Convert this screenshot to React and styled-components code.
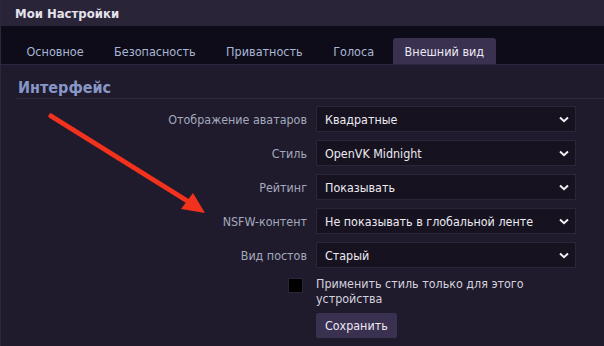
import React from "react";
import styled, { createGlobalStyle } from "styled-components";

const Global = createGlobalStyle`
  html, body { margin: 0; padding: 0; background: #1f1b2c; }
  body { width: 604px; height: 346px; overflow: hidden; font-family: "DejaVu Sans Condensed", "DejaVu Sans", sans-serif; font-stretch: condensed; }
`;

const Page = styled.div`
  position: relative;
  width: 604px;
  height: 346px;
  background: #1f1b2c;
  border-left: 1px solid #2c2740;
  box-sizing: border-box;
`;

const Header = styled.div`
  height: 26px;
  background: #2a2438;
  display: flex;
  align-items: center;
  padding-left: 14px;
  color: #e4e2ec;
  font-weight: bold;
  font-size: 13px;
`;

const TabBar = styled.div`
  height: 38px;
  background: #0f0c19;
  display: flex;
  align-items: flex-end;
  padding-left: 14px;
  gap: 7.5px;
  border-bottom: 1px solid #2c2740;
`;

const Tab = styled.div`
  height: 26px;
  padding: 0 11.5px;
  display: flex;
  align-items: center;
  font-size: 12.5px;
  border-radius: 3px 3px 0 0;
  color: ${(p) => (p.$active ? "#ece8f4" : "#a9b6d4")};
  background: ${(p) => (p.$active ? "#3a3050" : "transparent")};
`;

const Content = styled.div`
  padding: 13px 0 0 16px;
`;

const Heading = styled.div`
  font-size: 16px;
  line-height: 19px;
  font-weight: bold;
  color: #8797c8;
  padding: 0 0 1px 1px;
  border-bottom: 1px solid #2e2940;
`;

const Form = styled.div`
  display: grid;
  grid-template-columns: 290px 260px;
  column-gap: 9px;
  row-gap: 8px;
  padding-top: 7px;
  align-items: center;
`;

const Label = styled.div`
  text-align: right;
  font-size: 12.4px;
  color: #a4a9bd;
`;

const Select = styled.div`
  height: 26px;
  box-sizing: border-box;
  background: #16121f;
  border: 1px solid #2a2539;
  display: flex;
  align-items: center;
  justify-content: space-between;
  padding: 0 6px 0 8px;
  color: #eceaf2;
  font-size: 12.4px;
`;

const CheckCell = styled.div`
  display: flex;
  justify-content: flex-end;
  align-self: start;
  padding-top: 2px;
  padding-right: 4px;
`;

const Box = styled.div`
  width: 15px;
  height: 15px;
  box-sizing: border-box;
  background: #000;
  border: 1px solid #2a2539;
`;

const CheckText = styled.div`
  font-size: 12.4px;
  line-height: 15px;
  color: #d4d2de;
`;

const Button = styled.div`
  justify-self: start;
  height: 25px;
  padding: 0 9px;
  background: #3a3050;
  border-radius: 2px;
  display: flex;
  align-items: center;
  color: #ece8f4;
  font-size: 12.4px;
  margin-top: -1px;
`;

const Arrow = styled.svg`
  position: absolute;
  left: 0;
  top: 0;
  pointer-events: none;
`;

const Chevron = () => (
  <svg width="10" height="7" viewBox="0 0 10 7">
    <path d="M1 1.5 L5 5.2 L9 1.5" fill="none" stroke="#f0f0f4" strokeWidth="2" />
  </svg>
);

const rows = [
  ["Отображение аватаров", "Квадратные"],
  ["Стиль", "OpenVK Midnight"],
  ["Рейтинг", "Показывать"],
  ["NSFW-контент", "Не показывать в глобальной ленте"],
  ["Вид постов", "Старый"],
];

const tabs = ["Основное", "Безопасность", "Приватность", "Голоса", "Внешний вид"];

export default function App() {
  return (
    <>
      <Global />
      <Page>
        <Header>Мои Настройки</Header>
        <TabBar>
          {tabs.map((t, i) => (
            <Tab key={t} $active={i === 4}>{t}</Tab>
          ))}
        </TabBar>
        <Content>
          <Heading>Интерфейс</Heading>
          <Form>
            {rows.map(([l, v]) => (
              <React.Fragment key={l}>
                <Label>{l}</Label>
                <Select>
                  <span>{v}</span>
                  <Chevron />
                </Select>
              </React.Fragment>
            ))}
            <CheckCell><Box /></CheckCell>
            <CheckText>Применить стиль только для этого<br />устройства</CheckText>
            <div />
            <Button>Сохранить</Button>
          </Form>
        </Content>
        <Arrow width="604" height="346">
          <line x1="50" y1="116" x2="188" y2="202" stroke="#f2321c" strokeWidth="5" strokeLinecap="round" />
          <polygon points="180,209 204,213 192,193" fill="#f2321c" />
        </Arrow>
      </Page>
    </>
  );
}
